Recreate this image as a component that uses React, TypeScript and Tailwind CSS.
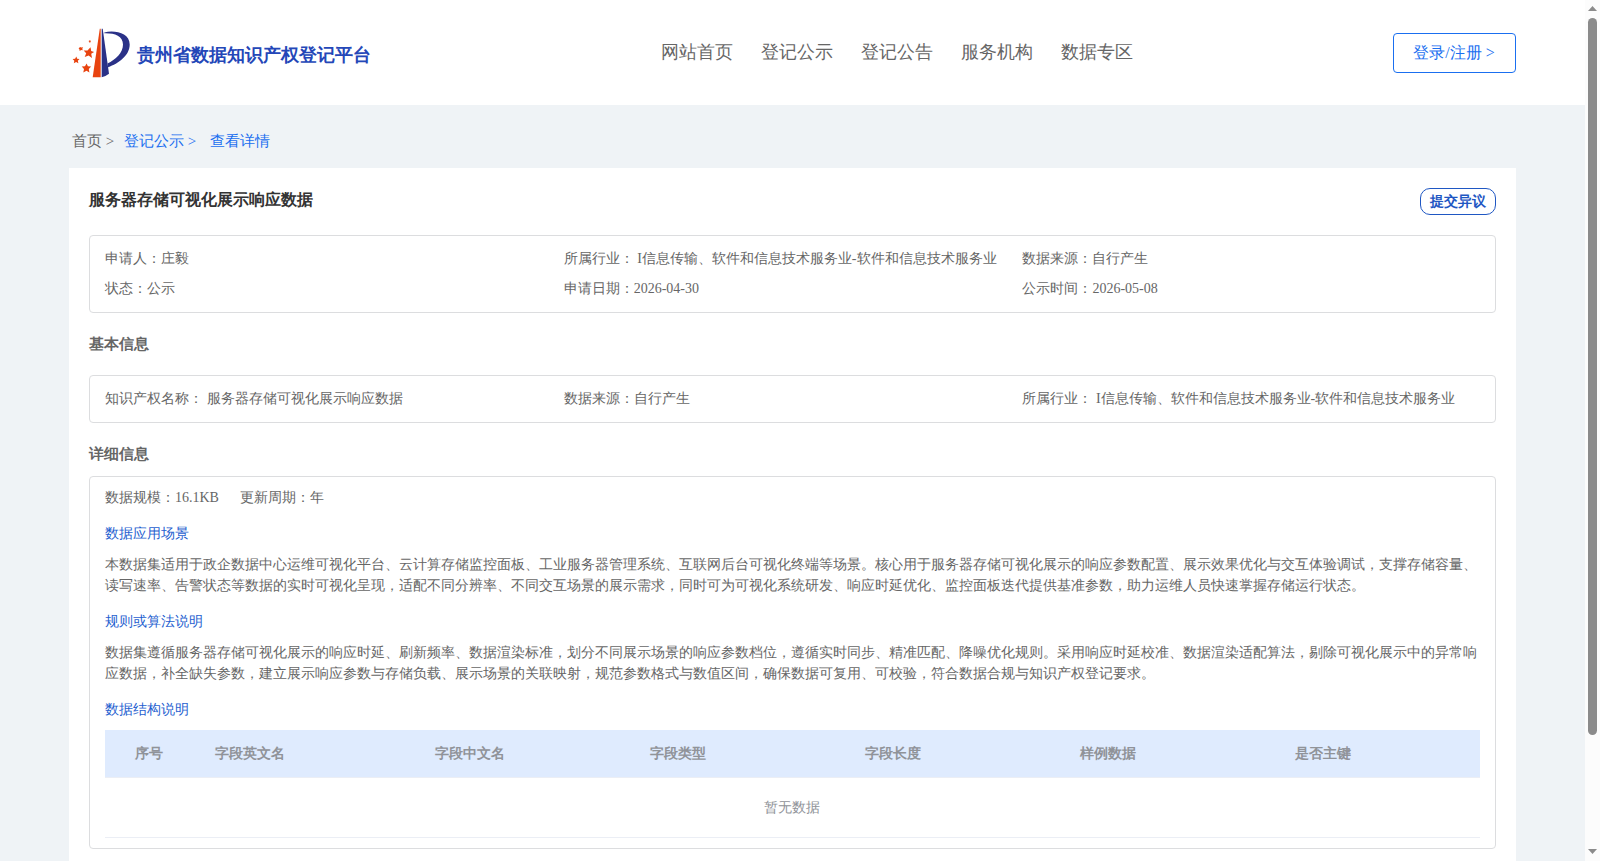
const navItems = ["网站首页", "登记公示", "登记公告", "服务机构", "数据专区"];

const summary = [
  "申请人：庄毅",
  "所属行业： I信息传输、软件和信息技术服务业-软件和信息技术服务业",
  "数据来源：自行产生",
  "状态：公示",
  "申请日期：2026-04-30",
  "公示时间：2026-05-08",
];

const basicInfo = [
  "知识产权名称： 服务器存储可视化展示响应数据",
  "数据来源：自行产生",
  "所属行业： I信息传输、软件和信息技术服务业-软件和信息技术服务业",
];

const sections = [
  {
    title: "数据应用场景",
    body: "本数据集适用于政企数据中心运维可视化平台、云计算存储监控面板、工业服务器管理系统、互联网后台可视化终端等场景。核心用于服务器存储可视化展示的响应参数配置、展示效果优化与交互体验调试，支撑存储容量、读写速率、告警状态等数据的实时可视化呈现，适配不同分辨率、不同交互场景的展示需求，同时可为可视化系统研发、响应时延优化、监控面板迭代提供基准参数，助力运维人员快速掌握存储运行状态。",
  },
  {
    title: "规则或算法说明",
    body: "数据集遵循服务器存储可视化展示的响应时延、刷新频率、数据渲染标准，划分不同展示场景的响应参数档位，遵循实时同步、精准匹配、降噪优化规则。采用响应时延校准、数据渲染适配算法，剔除可视化展示中的异常响应数据，补全缺失参数，建立展示响应参数与存储负载、展示场景的关联映射，规范参数格式与数值区间，确保数据可复用、可校验，符合数据合规与知识产权登记要求。",
  },
];

const columns = ["序号", "字段英文名", "字段中文名", "字段类型", "字段长度", "样例数据", "是否主键"];

function App() {
  return (
    <div className="flex h-[861px] w-full overflow-hidden bg-[#eff3f6] font-['Liberation_Serif',serif] text-sm text-[#666]">
      <div className="min-w-0 flex-1">
        <Header />
        <main className="mx-auto w-[1447px]">
          <Breadcrumb />
          <div className="h-[720px] bg-white px-5 pt-5">
            <div className="flex h-[27px] items-start justify-between">
              <h1 className="text-base leading-6 font-bold text-[#333]">服务器存储可视化展示响应数据</h1>
              <button className="h-[27px] w-[76px] rounded-[10px] border border-[#1f57c3] text-sm leading-[25px] font-bold text-[#1f57c3]">
                提交异议
              </button>
            </div>
            <InfoGrid items={summary} className="mt-5" />
            <h2 className="mt-5 text-[15px] leading-[22px] font-bold">基本信息</h2>
            <InfoGrid items={basicInfo} className="mt-5" />
            <h2 className="mt-5 text-[15px] leading-[22px] font-bold">详细信息</h2>
            <DetailPanel />
          </div>
        </main>
      </div>
      <Scrollbar />
    </div>
  );
}

function Header() {
  return (
    <header className="h-[105px] bg-white">
      <div className="mx-auto flex h-full w-[1447px] items-start justify-between">
        <div className="flex w-[591.5px] items-start pt-[27px] pl-[3px]">
          <Logo />
          <span className="mt-[15px] ml-[7px] text-lg leading-[27px] font-bold whitespace-nowrap text-[#2447b8]">
            贵州省数据知识产权登记平台
          </span>
        </div>
        <nav className="flex flex-1 gap-7 pt-[38px] text-lg leading-7">
          {navItems.map((item) => (
            <a key={item}>{item}</a>
          ))}
        </nav>
        <button className="mt-[33px] h-10 w-[123px] rounded border border-[#1a6ff0] pr-px text-base text-[#1a6ff0]">
          登录/注册 &gt;
        </button>
      </div>
    </header>
  );
}

function Logo() {
  return (
    <svg width="58" height="52" viewBox="0 0 58 52" className="shrink-0">
      <path d="M27.800 1.800h.9V50.200h-8z" fill="#e8430f" />
      <path d="M29.700 1.800h1L37 46.700Q33.500 49.500 29.700 50.200z" fill="#2a3187" />
      <path
        d="M32.300 5.400C43 3 57.700 5.800 57.700 17.500C57.700 28.500 46.500 36.500 36.200 40.200L35.500 36.500C43.500 32.500 51 26 51 17.500C51 8.500 42 5.900 32.300 6.200z"
        fill="#2a3187"
      />
      <g fill="#e8430f">
        <path d="M18.500 20.200l.7 3.800 2.900.9-2.900 1.900.8 4.100-3.400-2.500-3.900 1.500 1.500-3.700-2.600-2.600 3.900-.2z" />
        <path d="M4.300 29.500l.9 2.200 2.300.3-1.700 1.700.6 2.500-2.300-1.200-2.300 1.300.5-2.500-1.700-1.700 2.500-.3z" />
        <path d="M14.600 36.400l1.300 2.900 3.200.3-2.300 2.300.6 3.500-2.900-1.600-3.200 1.600.7-3.400-2.300-2.400 3.300-.3z" />
        <path d="M8 19.900l1.200.7 1.900-.4-.8 1.500.4 1.500-1.500-.1-1.600 1-.1-1.500-.9-1.100z" />
        <path d="M17.200 13.300l.8.400.9-.2-.3.900.3.900-.8-.1-.8.500-.1-.9-.6-.6z" />
      </g>
    </svg>
  );
}

function Breadcrumb() {
  return (
    <div className="flex h-[63px] pt-[25px] pl-[3px] text-[15px] leading-[22px] text-[#1a6ff0]">
      <span className="w-[52px] text-[#666]">首页 &gt;</span>
      <span className="w-[86px]">登记公示 &gt;</span>
      <span>查看详情</span>
    </div>
  );
}

function InfoGrid({ items, className }: { items: string[]; className: string }) {
  return (
    <div className={`grid grid-cols-[458.700px_458.700px_1fr] rounded border border-[#dcdddf] px-[15px] py-2 ${className}`}>
      {items.map((item) => (
        <div key={item} className="leading-[30px] whitespace-nowrap">
          {item}
        </div>
      ))}
    </div>
  );
}

function DetailPanel() {
  return (
    <div className="mt-[11px] h-[373px] rounded border border-[#dcdddf] px-[15px] pt-[10px]">
      <div className="flex gap-[21px] leading-[21px]">
        <span>数据规模：16.1KB</span>
        <span>更新周期：年</span>
      </div>
      {sections.map(({ title, body }) => (
        <section key={title}>
          <SectionTitle>{title}</SectionTitle>
          <p className="mt-[10px] leading-[21px]">{body}</p>
        </section>
      ))}
      <SectionTitle>数据结构说明</SectionTitle>
      <div className="mt-[10px] grid h-12 grid-cols-[80px_220px_215px_215px_215px_215px_1fr] items-center border-b border-[#ebeef5] bg-[#dfebfe] pl-[30px] font-bold text-[#909399]">
        {columns.map((column) => (
          <span key={column}>{column}</span>
        ))}
      </div>
      <div className="flex h-[60px] items-center justify-center border-b border-[#ebeef5] pr-px text-[#909399]">
        暂无数据
      </div>
    </div>
  );
}

function SectionTitle({ children }: { children: string }) {
  return <h3 className="mt-[15px] leading-[21px] text-[#1f5fd0]">{children}</h3>;
}

function Scrollbar() {
  return (
    <div className="flex w-[15px] flex-col items-center bg-[#fcfcfc]">
      <svg width="9" height="5" className="mt-1.5 shrink-0">
        <path d="M0 5L4.500 0L9 5z" fill="#8b8b8b" />
      </svg>
      <div className="mt-[7px] h-[717px] w-[9px] shrink-0 rounded-full bg-[#8b8b8b]" />
      <svg width="9" height="5" className="mt-auto mb-[7px] shrink-0">
        <path d="M0 0L4.500 5L9 0z" fill="#8b8b8b" />
      </svg>
    </div>
  );
}

export default App;
